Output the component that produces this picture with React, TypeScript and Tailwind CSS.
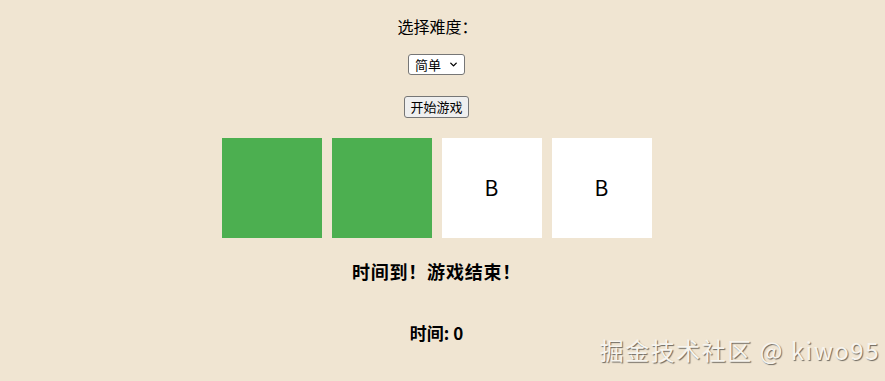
import { ChevronDown } from "lucide-react";

const cards = [
  { id: 1, matched: true, label: "" },
  { id: 2, matched: true, label: "" },
  { id: 3, matched: false, label: "B" },
  { id: 4, matched: false, label: "B" },
];

export default function App() {
  return (
    <div
      className="relative h-[381px] w-[885px] overflow-hidden bg-[#f0e5d2] text-black"
      style={{ fontFamily: '"Noto Sans CJK SC", "Noto Sans", sans-serif' }}
    >
      <div className="flex w-[873px] flex-col items-center">
        {/* difficulty picker */}
        <p className="mt-[15px] pl-[2px] text-[16px] leading-[22px]">选择难度：</p>
        <div className="relative mt-[17px]">
          <select className="block h-[21px] w-[57px] appearance-none rounded-[3px] border border-[#767676] bg-white pl-[6px] text-[13px] leading-[19px]">
            <option>简单</option>
            <option>中等</option>
            <option>困难</option>
          </select>
          <ChevronDown
            className="pointer-events-none absolute right-[6px] top-[5px] h-[11px] w-[11px]"
            strokeWidth={3}
          />
        </div>
        <button className="mt-[21px] h-[22px] rounded-[3px] border border-[#767676] bg-[#efefef] px-[5px] text-[13px] leading-[20px]">
          开始游戏
        </button>

        {/* cards */}
        <div className="mt-[20px] flex gap-[10px]">
          {cards.map((card) => (
            <div
              key={card.id}
              className={
                card.matched
                  ? "h-[100px] w-[100px] bg-[#4caf50]"
                  : "flex h-[100px] w-[100px] items-center justify-center bg-white text-[21px]"
              }
            >
              {card.label}
            </div>
          ))}
        </div>

        <h3 className="mt-[20px] text-[18px] font-bold leading-[26px] tracking-[0.8px]">时间到！游戏结束！</h3>
        <p className="mt-[36px] text-[17px] font-bold leading-[26px]">时间: 0</p>
      </div>

      {/* watermark */}
      <div
        className="absolute right-[5px] top-[335px] text-[24px] leading-[30px] tracking-[1.5px] text-[#f7f4ee]"
        style={{ textShadow: "1px 1px 1px rgba(0,0,0,0.55)" }}
      >
        掘金技术社区 @ kiwo95
      </div>
    </div>
  );
}
